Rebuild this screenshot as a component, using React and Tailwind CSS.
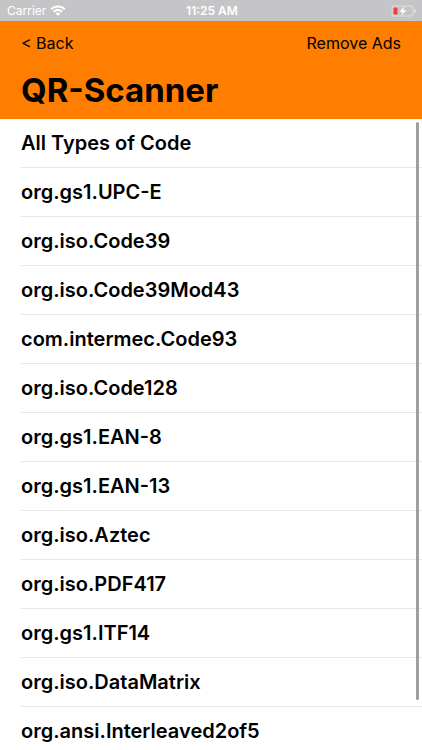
const codeTypes = [
  "All Types of Code",
  "org.gs1.UPC-E",
  "org.iso.Code39",
  "org.iso.Code39Mod43",
  "com.intermec.Code93",
  "org.iso.Code128",
  "org.gs1.EAN-8",
  "org.gs1.EAN-13",
  "org.iso.Aztec",
  "org.iso.PDF417",
  "org.gs1.ITF14",
  "org.iso.DataMatrix",
  "org.ansi.Interleaved2of5",
];

function WifiIcon() {
  return (
    <svg viewBox="0 0 16 12" className="h-3 w-4" fill="currentColor" aria-hidden="true">
      <path d="M8 2.5c2.2 0 4.2.9 5.7 2.3.1.1.3.1.4 0l1.1-1.1c.1-.1.1-.3 0-.4C11.2-.5 4.8-.5.8 3.3c-.1.1-.1.3 0 .4l1.1 1.1c.1.1.3.1.4 0C3.8 3.4 5.8 2.5 8 2.5z" />
      <path d="M8 6.1c1.2 0 2.3.4 3.2 1.2.1.1.3.1.4 0l1.1-1.1c.1-.1.1-.3 0-.4-2.7-2.4-6.7-2.4-9.4 0-.1.1-.1.3 0 .4l1.1 1.1c.1.1.3.1.4 0C5.7 6.5 6.8 6.1 8 6.1z" />
      <path d="M10.2 8.7c.1-.1.1-.3 0-.4-1.3-1.1-3.1-1.1-4.4 0-.1.1-.1.3 0 .4l2 2c.1.1.3.1.4 0z" />
    </svg>
  );
}

function BatteryIcon() {
  return (
    <svg viewBox="0 0 26 12" className="h-3 w-[26px]" aria-hidden="true">
      <rect x="1" y="1" width="21" height="10" rx="2.5" fill="none" stroke="#fff" strokeOpacity="0.45" />
      <path d="M23.5 4v4c.9-.3 1.5-1.1 1.5-2s-.6-1.7-1.5-2z" fill="#fff" fillOpacity="0.6" />
      <rect x="2.5" y="2.5" width="4" height="7" rx="1" fill="#f0413a" />
      <path d="M13.3 1.2 8.6 6.7h2.9l-1.2 4.1L15.2 5.3h-3z" fill="#fff" />
    </svg>
  );
}

export default function App() {
  return (
    <div className="flex h-screen flex-col overflow-hidden bg-white font-['Inter','Liberation_Sans',sans-serif] text-black">
      <div className="grid h-[21px] shrink-0 grid-cols-3 items-center bg-[#c5c5c7] pr-[5px] pl-[7px] text-white">
        <div className="flex items-center gap-1 text-xs">
          Carrier
          <WifiIcon />
        </div>
        <div className="text-center text-xs font-semibold">11:25 AM</div>
        <div className="flex justify-end">
          <BatteryIcon />
        </div>
      </div>

      <header className="shrink-0 bg-[#ff7e00] px-[21px] pb-1">
        <nav className="flex h-11 items-center justify-between text-base">
          <button type="button">&lt; Back</button>
          <button type="button">Remove Ads</button>
        </nav>
        <h1 className="text-[33px] leading-[50px] font-bold">QR-Scanner</h1>
      </header>

      <main className="relative min-h-0 flex-1">
        <ul className="h-full overflow-y-auto pl-[21px] [scrollbar-width:none]">
          {codeTypes.map((type) => (
            <li key={type} className="border-b border-[#e8e8e8]">
              <button type="button" className="block h-12 w-full text-left text-xl font-semibold">
                {type}
              </button>
            </li>
          ))}
        </ul>
        <div className="absolute top-[3px] right-[3px] h-11/12 w-[3px] rounded-full bg-[#9f9f9f]" />
      </main>
    </div>
  );
}
